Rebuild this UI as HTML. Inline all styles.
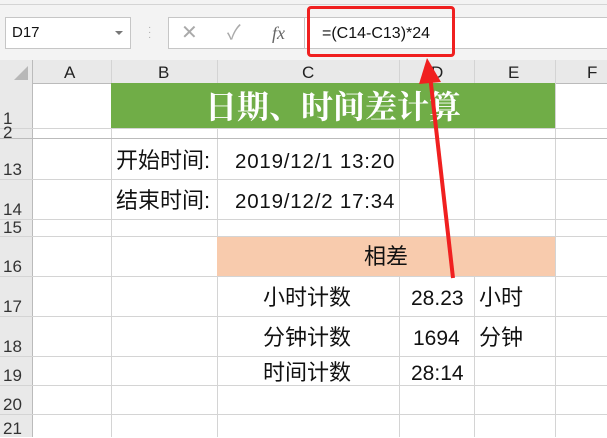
<!DOCTYPE html><html><head><meta charset="utf-8"><style>
body{margin:0;width:607px;height:437px;overflow:hidden;background:#fff;position:relative;font-family:"Liberation Sans","Noto Sans CJK SC",sans-serif}
.a{position:absolute}
.t{position:absolute;font-size:21px;color:#111;white-space:nowrap;line-height:24px}
.c{font-size:22px}
.rn{position:absolute;left:0;width:30px;font-size:17px;color:#333;text-align:left;padding-left:3px;line-height:18px}
.h{position:absolute;top:63px;font-size:17px;color:#222;line-height:20px}
</style></head><body>
<div class="a" style="left:0;top:0;width:607px;height:60px;background:#f3f3f3"></div>
<div class="a" style="left:0;top:4px;width:607px;height:1px;background:#d4d4d4"></div>
<div class="a" style="left:5px;top:17px;width:124px;height:30px;background:#fff;border:1px solid #c6c6c6"></div>
<div class="t" style="left:12px;top:21px;font-size:15px">D17</div>
<div class="a" style="left:115px;top:31px;border-left:4px solid transparent;border-right:4px solid transparent;border-top:4px solid #777"></div>
<div class="a" style="left:148px;top:25px;color:#aaa;font-size:10px;line-height:5px">·<br>·<br>·</div>
<div class="a" style="left:168px;top:17px;width:439px;height:30px;background:#fff;border:1px solid #c6c6c6;border-right:none"></div>
<div class="a" style="left:304px;top:17px;width:1px;height:31px;background:#c6c6c6"></div>
<div class="t" style="left:181px;top:21px;color:#aaa;font-size:20px">✕</div>
<div class="t" style="left:227px;top:21px;color:#aaa;font-size:20px">✓</div>
<div class="t" style="left:272px;top:21px;color:#666;font-family:'Liberation Serif',serif;font-style:italic;font-size:18px">fx</div>
<div class="t" style="left:322px;top:22px;font-size:16px">=(C14-C13)*24</div>
<div class="a" style="left:307px;top:6px;width:142px;height:45px;border:3px solid #f02020;border-radius:4px"></div>
<div class="a" style="left:0;top:60px;width:607px;height:23px;background:#e9e9e9;border-bottom:1px solid #bbb"></div>
<div class="a" style="left:0;top:60px;width:32px;height:377px;background:#e9e9e9;border-right:1px solid #bbb"></div>
<div class="a" style="left:14px;top:66px;border-left:14px solid transparent;border-bottom:14px solid #b8b8b8"></div>
<div class="h" style="left:64px">A</div>
<div class="h" style="left:158px">B</div>
<div class="h" style="left:302px">C</div>
<div class="h" style="left:431px">D</div>
<div class="h" style="left:508px">E</div>
<div class="h" style="left:587px">F</div>
<div class="a" style="left:111px;top:60px;width:1px;height:377px;background:#d4d4d4"></div>
<div class="a" style="left:217px;top:60px;width:1px;height:377px;background:#d4d4d4"></div>
<div class="a" style="left:399px;top:60px;width:1px;height:377px;background:#d4d4d4"></div>
<div class="a" style="left:474px;top:60px;width:1px;height:377px;background:#d4d4d4"></div>
<div class="a" style="left:555px;top:60px;width:1px;height:377px;background:#d4d4d4"></div>
<div class="a" style="left:0;top:128px;width:607px;height:1px;background:#d4d4d4"></div>
<div class="a" style="left:0;top:138px;width:607px;height:1px;background:#bbb"></div>
<div class="a" style="left:0;top:179px;width:607px;height:1px;background:#d4d4d4"></div>
<div class="a" style="left:0;top:219px;width:607px;height:1px;background:#d4d4d4"></div>
<div class="a" style="left:0;top:236px;width:607px;height:1px;background:#d4d4d4"></div>
<div class="a" style="left:0;top:276px;width:607px;height:1px;background:#d4d4d4"></div>
<div class="a" style="left:0;top:316px;width:607px;height:1px;background:#d4d4d4"></div>
<div class="a" style="left:0;top:356px;width:607px;height:1px;background:#d4d4d4"></div>
<div class="a" style="left:0;top:385px;width:607px;height:1px;background:#d4d4d4"></div>
<div class="a" style="left:0;top:414px;width:607px;height:1px;background:#d4d4d4"></div>
<div class="rn" style="top:110px">1</div>
<div class="rn" style="top:126px;height:12px;overflow:hidden;line-height:14px">2</div>
<div class="rn" style="top:161px">13</div>
<div class="rn" style="top:201px">14</div>
<div class="rn" style="top:219px">15</div>
<div class="rn" style="top:258px">16</div>
<div class="rn" style="top:298px">17</div>
<div class="rn" style="top:338px">18</div>
<div class="rn" style="top:367px">19</div>
<div class="rn" style="top:396px">20</div>
<div class="rn" style="top:420px">21</div>
<div class="a" style="left:111px;top:83px;width:444px;height:45px;background:#70ad47"></div>
<div class="t" style="left:111px;top:86px;width:444px;text-align:center;color:#fff;font-size:32px;line-height:38px;font-weight:bold;font-family:'Noto Serif CJK SC',serif">日期、时间差计算</div>
<div class="a" style="left:217px;top:237px;width:338px;height:39px;background:#f8cbad"></div>
<div class="t c" style="left:217px;top:245px;width:338px;text-align:center">相差</div>
<div class="t c" style="left:116px;top:149px">开始时间:</div>
<div class="t" style="left:235px;top:150px;font-size:20.5px;letter-spacing:0.8px">2019/12/1 13:20</div>
<div class="t c" style="left:116px;top:189px">结束时间:</div>
<div class="t" style="left:235px;top:190px;font-size:20.5px;letter-spacing:0.8px">2019/12/2 17:34</div>
<div class="t c" style="left:263px;top:286px">小时计数</div>
<div class="t" style="left:411px;top:287px">28.23</div>
<div class="t c" style="left:479px;top:286px">小时</div>
<div class="t c" style="left:263px;top:326px">分钟计数</div>
<div class="t" style="left:413px;top:327px">1694</div>
<div class="t c" style="left:479px;top:326px">分钟</div>
<div class="t c" style="left:263px;top:361px">时间计数</div>
<div class="t" style="left:411px;top:362px">28:14</div>
<svg class="a" style="left:0;top:0" width="607" height="437"><line x1="453" y1="278" x2="430" y2="75" stroke="#f02020" stroke-width="4"/><polygon points="427,58 419,84 441,82" fill="#f02020"/></svg>
</body></html>
